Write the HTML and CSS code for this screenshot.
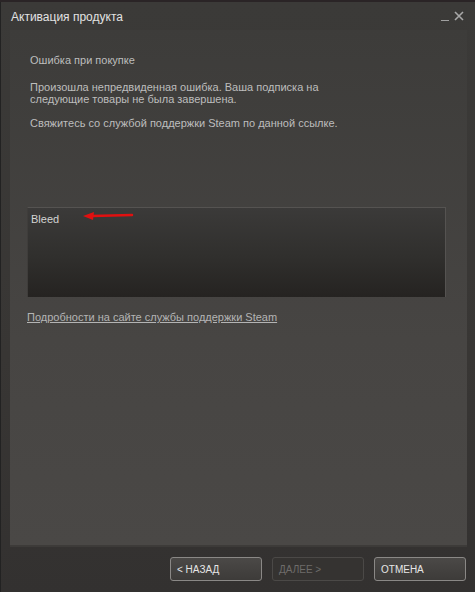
FILE: index.html
```html
<!DOCTYPE html>
<html lang="ru">

<head>
    <meta charset="UTF-8">
    <title>Активация продукта</title>
    <link rel="stylesheet" href="styles.css">
</head>

<body>
    <div class="window">
        <div class="titlebar">
            <span class="title">Активация продукта</span>
            <span class="controls">
                <span class="minimize"></span>
                <svg class="close" width="10" height="10" viewBox="0 0 10 10">
                    <path d="M1 1 L9 9 M9 1 L1 9" stroke="#a8a8a8" stroke-width="1.6" fill="none"/>
                </svg>
            </span>
        </div>
        <div class="panel">
            <p class="heading">Ошибка при покупке</p>
            <p class="msg">Произошла непредвиденная ошибка. Ваша подписка на<br>следующие товары не была завершена.</p>
            <p class="msg">Свяжитесь со службой поддержки Steam по данной ссылке.</p>
            <div class="items">
                <span class="item">Bleed</span>
                <svg class="arrow" width="52" height="10" viewBox="0 0 52 10">
                    <path d="M10 5 L50 4" stroke="#e01010" stroke-width="2.5" stroke-linecap="round" fill="none"/>
                    <path d="M1 5 L12 1 L11 9 Z" fill="#e01010"/>
                </svg>
            </div>
            <a class="support" href="#">Подробности на сайте службы поддержки Steam</a>
        </div>
        <div class="footer">
            <button class="btn">&lt; НАЗАД</button>
            <button class="btn disabled">ДАЛЕЕ &gt;</button>
            <button class="btn">ОТМЕНА</button>
        </div>
    </div>
</body>

</html>
```

FILE: styles.css
```css
* {
    margin: 0;
    padding: 0;
    box-sizing: border-box;
}

html,
body {
    width: 100%;
    height: 100%;
    background: #2a2426;
    overflow: hidden;
}

body {
    padding-top: 2px;
    font-family: "Liberation Sans", Arial, sans-serif;
}

.window {
    height: 590px;
    display: flex;
    flex-direction: column;
    border-left: 1px solid #222;
    background: linear-gradient(#3b3a38, #383634 60%, #333130);
}

.titlebar {
    height: 28px;
    display: flex;
    justify-content: space-between;
    padding: 8px 11px 0 10px;
}

.title {
    font-size: 12px;
    color: #e2e2e2;
}

.controls {
    display: flex;
    align-items: flex-start;
    gap: 5px;
    padding-top: 1px;
}

.minimize {
    width: 8px;
    height: 10px;
    border-bottom: 1px solid #a0a0a0;
}

.panel {
    flex: 1;
    margin: 0 8px 0 9px;
    padding: 24px 0 0 20px;
    background: linear-gradient(#3d3c3a, #474543 60%, #4a4846);
    border-bottom: 2px solid #3d3b39;
}

.heading,
.msg {
    font-size: 11px;
    line-height: 12px;
    color: #bdbdbd;
}

.msg {
    margin-top: 15px;
}

.msg + .msg {
    margin-top: 12px;
}

.items {
    position: relative;
    margin: 78px 0 0 -3px;
    width: 419px;
    height: 90px;
    padding: 1px 3px;
    background: linear-gradient(#3b3a39, #302f2d 55%, #252321);
    border-top: 1px solid #555351;
    border-right: 1px solid #555351;
    border-left: 1px solid #3f3d3b;
}

.item {
    font-size: 11px;
    color: #d4d4d4;
}

.arrow {
    position: absolute;
    left: 54px;
    top: 3px;
}

.support {
    display: inline-block;
    margin: 14px 0 0 -3px;
    font-size: 11px;
    color: #b4b4b4;
    text-decoration: underline;
}

.footer {
    height: 45px;
    display: flex;
    justify-content: flex-end;
    gap: 10px;
    padding: 10px 9px 0 0;
}

.btn {
    width: 92px;
    height: 24px;
    padding-left: 6px;
    text-align: left;
    font-family: "Liberation Sans", Arial, sans-serif;
    font-size: 10px;
    color: #e6e6e6;
    border: 1px solid #8a8886;
    border-radius: 3px;
    background: linear-gradient(#4b4947, #3d3b39);
}

.btn.disabled {
    color: #6e6c6a;
    border-color: #4b4947;
    background: #353331;
}
```
